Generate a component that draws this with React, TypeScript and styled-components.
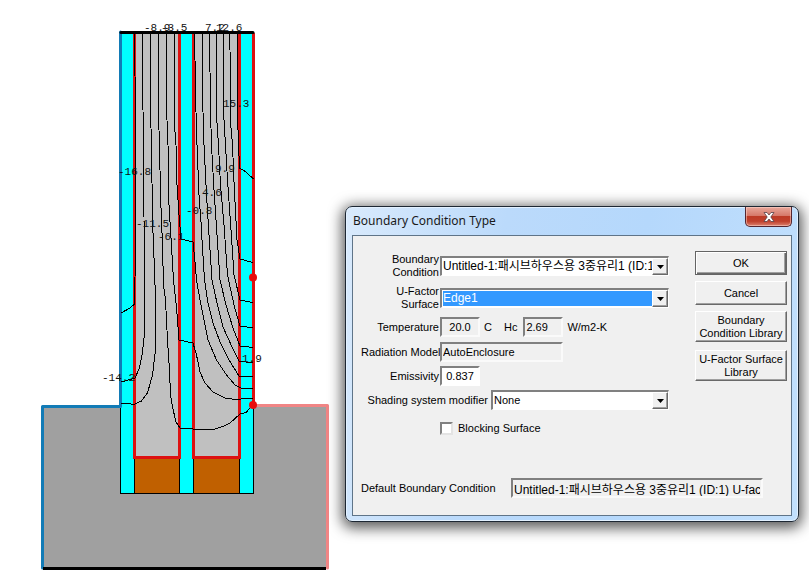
import React from "react";
import styled, { createGlobalStyle, css } from "styled-components";

const GlobalStyle = createGlobalStyle`
  *, *::before, *::after { box-sizing: border-box; }
  body {
    margin: 0;
    background: #fff;
    color: #000;
    font: 11px/13px "Liberation Sans", "Noto Sans CJK KR", sans-serif;
  }
  button, input, select { font: inherit; color: inherit; margin: 0; }
`;

const Workspace = styled.main`
  display: flex;
  align-items: flex-start;
  min-height: 100vh;
  overflow: hidden;
`;

const Drawing = styled.svg`
  display: block;
  flex: none;
  width: 330px;
  height: 583px;
`;

const Isotherms = styled.g`
  fill: none;
  stroke: #000;
  stroke-width: 1;
  shape-rendering: crispEdges;
`;

const Readings = styled.g`
  font: 11px "Liberation Mono", monospace;
  fill: #111;
`;

const Window = styled.section`
  flex: 1;
  min-width: 440px;
  margin: 206px 10px 0 15px;
  padding: 0 6px 5px;
  border: 1px solid #1d2733;
  border-radius: 7px;
  background: linear-gradient(100deg, #d9eafc 0, #bbdafb 32%, #b5d8fc 60%, #c2e0fd 100%);
  box-shadow: inset 0 0 0 1px #e3f1ff, 0 3px 14px 3px rgba(0, 0, 0, 0.65);
`;

const TitleBar = styled.header`
  display: flex;
  align-items: flex-start;
  justify-content: space-between;
  height: 28px;
`;

const Title = styled.h1`
  margin: 0;
  padding-left: 1px;
  font: 400 12px/27px "Noto Sans", sans-serif;
  color: #1a1a1a;
`;

const CloseButton = styled.button`
  display: grid;
  place-items: center;
  width: 47px;
  height: 20px;
  padding: 0;
  border: 1px solid #542630;
  border-top: 0;
  border-radius: 0 0 5px 5px;
  background: linear-gradient(#e9a89b 0, #d6796a 45%, #bd3a26 50%, #c0402c 75%, #dc8270 100%);
  box-shadow: inset 0 0 0 1px rgba(255, 220, 210, 0.5);
`;

const Client = styled.form`
  padding: 15px 4px 17px 8px;
  border: 1px solid #5f7488;
  background: #f0f0f0;
  white-space: nowrap;
`;

const Columns = styled.div`
  display: flex;
  gap: 26px;
`;

const Fields = styled.div`
  flex: 1;
  min-width: 0;
  padding-top: 2px;
`;

const Row = styled.div<{ $gap?: number }>`
  display: flex;
  align-items: center;
  margin-top: ${(p) => p.$gap ?? 0}px;
`;

const Label = styled.label<{ $wide?: boolean }>`
  flex: none;
  width: ${(p) => (p.$wide ? 130 : 79)}px;
  padding-right: ${(p) => (p.$wide ? 3 : 1)}px;
  text-align: right;
`;

const Unit = styled.span`
  padding: 0 4px;
`;

const HcLabel = styled.label`
  padding: 0 6px 0 8px;
`;

const sunken = css`
  border: 2px solid;
  border-color: #808080 #fff #fff #808080;
`;

const Field = styled.input<{ $width: number; $center?: boolean; $large?: boolean }>`
  ${sunken}
  width: ${(p) => p.$width}px;
  height: 20px;
  padding: 0 1px;
  border-radius: 0;
  outline: 0;
  background: #fff;
  font-size: ${(p) => (p.$large ? 12 : 11)}px;
  text-align: ${(p) => (p.$center ? "center" : "left")};
  &:read-only {
    background: #f0f0f0;
    border-right-color: #fafafa;
    border-bottom-color: #fafafa;
  }
`;

const SelectFrame = styled.div`
  ${sunken}
  position: relative;
  flex: 1;
  min-width: 0;
  height: 20px;
  border-right-width: 1px;
  border-bottom-width: 1px;
  background: #fff;
`;

const NativeSelect = styled.select<{ $active?: boolean; $large?: boolean }>`
  appearance: none;
  display: block;
  width: calc(100% - 17px);
  height: 15px;
  margin: 1px;
  padding: 0;
  border: 0;
  border-radius: 0;
  outline: 0;
  overflow: hidden;
  text-overflow: clip;
  line-height: 15px;
  font-size: ${(p) => (p.$large ? 12 : 11)}px;
  background: ${(p) => (p.$active ? "#3399ff" : "#fff")};
  color: ${(p) => (p.$active ? "#fff" : "#000")};
`;

const DropArrow = styled.span`
  position: absolute;
  inset: 0 0 0 auto;
  width: 16px;
  display: grid;
  place-items: center;
  border: 1px solid;
  border-color: #fff #696969 #696969 #fff;
  box-shadow: inset -1px -1px #a0a0a0;
  background: #f0f0f0;
  pointer-events: none;
`;

const CheckBox = styled.input`
  ${sunken}
  appearance: none;
  width: 13px;
  height: 13px;
  border-color: #808080 #e3e3e3 #e3e3e3 #808080;
  background: #fff;
  &:checked { background: #333; }
`;

const CheckLabel = styled.label`
  display: flex;
  align-items: center;
  gap: 5px;
  margin-left: 79px;
`;

const Buttons = styled.div`
  display: flex;
  flex-direction: column;
  gap: 6px;
  flex: none;
  width: 92px;
`;

const PushButton = styled.button<{ $tall?: boolean; $primary?: boolean }>`
  min-height: ${(p) => (p.$tall ? 31 : 24)}px;
  margin-bottom: ${(p) => (p.$tall ? 2 : 0)}px;
  padding: 0;
  border: 1px solid;
  border-color: ${(p) => (p.$primary ? "#646464" : "#fff #696969 #696969 #fff")};
  border-radius: 0;
  background: #f0f0f0;
  box-shadow: ${(p) =>
    p.$primary ? "inset 1px 1px #fff, inset -1px -1px #696969, inset -2px -2px #a0a0a0" : "inset -1px -1px #a0a0a0"};
`;

const DefaultLabel = styled.label`
  flex: none;
  width: 150px;
`;

const isotherms = [
  "134.5,33 135.5,118 135.5,250 134.5,304 130,308 121,313",
  "142.5,33 143,110 144,217 144.5,333 142.5,352 139.5,368 135,378 121.5,382",
  "150.5,33 150.5,110 151.5,145 152.5,220 154.5,270 155.5,300 155.5,350 152.5,375 147.5,393 141.5,401 133.5,404.5 126.5,403 121,403",
  "158.5,33 158.5,115 159.5,145 160.5,195 162.5,245 163.5,285 165.5,300 167.5,340 169.5,370 170.5,395 172.5,407 176,422 180,428 193,429 203.5,429.5 215.5,429 224,426 230,423 240,414 246,412.5 252,406",
  "166.5,33 166.5,108 168,145 169,205 171,238 173.5,280 176.5,307 179,340 193,343 196.5,355 200,372 205,383 213,392 225,398 235,399.5 253,398",
  "174.5,33 174.5,125 176,145 177,185 179,215 181,239 193,242 195,262 196.5,280 200,300 204,320 208,340 216.5,360 226.5,375 235,385 241,388 253,388",
  "194.5,33 196,112 197,145 199,195 201,222 202.5,248 204.5,280 208,303 213,323 220,342 229,360 239,376 253,377",
  "202.5,33 202.5,95 204,145 206.5,195 209,235 212,280 217,303 223,327 232,347 239,361 253,363",
  "209.5,33 210.5,110 211.5,145 214,190 217,235 220,280 226,305 233,328 240,346 253,347.5",
  "216.5,33 216.5,115 218.5,145 220.5,185 224,225 227.5,275 234,305 240,326 253,328",
  "223.5,33 224,120 225.5,145 227.5,180 231,230 234,275 240,300 253,302.5",
  "229.5,33 230,50 231,128 232.5,145 234,182 237,240 240,259 253,262.5",
  "237.5,33 238,130 239.5,168 246,172 253.5,179",
];

const readings: [number, number, string][] = [
  [144, 31, "-8.9"],
  [161, 31, "-3.5"],
  [205, 31, "7.2"],
  [216, 31, "12.6"],
  [223, 107, "15.3"],
  [118, 175, "-16.8"],
  [215, 172, "9.9"],
  [202, 196, "4.6"],
  [186, 214, "-0.8"],
  [136, 227, "-11.5"],
  [158, 240, "-6.1"],
  [102, 381, "-14.2"],
  [242, 362, "1.9"],
];

function GlazingSection() {
  return (
    <Drawing viewBox="0 0 330 583" role="img" aria-label="Glazing section with isotherms">
      <rect x="42" y="406" width="285" height="162" fill="#a0a0a0" />
      <rect x="120.5" y="32.5" width="133" height="461" fill="#00ffff" stroke="#000" />
      <rect x="134.5" y="33" width="45" height="425" fill="#c0c0c0" />
      <rect x="193.5" y="33" width="46" height="425" fill="#c0c0c0" />
      <rect x="134.5" y="457.5" width="45" height="36" fill="#c06000" stroke="#000" />
      <rect x="193.5" y="457.5" width="46" height="36" fill="#c06000" stroke="#000" />
      <g fill="none" strokeWidth="3">
        <path d="M134.5 33V457.500H179.500V33M193.500 33V457.500H239.500V33M253.500 33V405" stroke="#dd1111" />
        <path d="M120.500 32V406.500H42.500V568" stroke="#127bb6" strokeLinejoin="round" strokeLinecap="round" />
        <path d="M43 568.500H326" stroke="#000" />
        <path d="M254 405.500H327.500V568" stroke="#f08585" strokeLinejoin="round" strokeLinecap="round" />
      </g>
      <Isotherms>
        {isotherms.map((points) => (
          <polyline key={points} points={points} />
        ))}
      </Isotherms>
      <path d="M121 32.500H253" stroke="#000" strokeWidth="3" strokeLinecap="round" />
      <circle cx="253" cy="277.500" r="4" fill="#e80c0c" />
      <circle cx="253" cy="405" r="4" fill="#e80c0c" />
      <Readings>
        {readings.map(([x, y, value]) => (
          <text key={value} x={x} y={y}>{value}</text>
        ))}
      </Readings>
    </Drawing>
  );
}

function Select(props: { id: string; value: string; active?: boolean; large?: boolean }) {
  return (
    <SelectFrame>
      <NativeSelect id={props.id} $active={props.active} $large={props.large}>
        <option>{props.value}</option>
      </NativeSelect>
      <DropArrow>
        <svg width="7" height="4" viewBox="0 0 7 4" aria-hidden="true">
          <path d="M0 0H7L3.500 4Z" />
        </svg>
      </DropArrow>
    </SelectFrame>
  );
}

export default function App() {
  return (
    <>
      <GlobalStyle />
      <Workspace>
        <GlazingSection />
        <Window role="dialog" aria-labelledby="title">
          <TitleBar>
            <Title id="title">Boundary Condition Type</Title>
            <CloseButton type="button" aria-label="Close">
              <svg width="12" height="10" viewBox="0 0 12 10" aria-hidden="true">
                <path d="M1 .5H4L6 3L8 .5H11L7.800 5L11 9.500H8L6 7L4 9.500H1L4.200 5Z" fill="#fff" stroke="#574046" strokeWidth=".8" />
              </svg>
            </CloseButton>
          </TitleBar>
          <Client onSubmit={(e) => e.preventDefault()}>
            <Columns>
              <Fields>
                <Row>
                  <Label htmlFor="condition">Boundary<br />Condition</Label>
                  <Select id="condition" value="Untitled-1:패시브하우스용 3중유리1 (ID:1) U-factor" large />
                </Row>
                <Row $gap={6}>
                  <Label htmlFor="surface">U-Factor<br />Surface</Label>
                  <Select id="surface" value="Edge1" active large />
                </Row>
                <Row $gap={6}>
                  <Label htmlFor="temperature">Temperature</Label>
                  <Field id="temperature" $width={40} $center readOnly defaultValue="20.0" />
                  <Unit>C</Unit>
                  <HcLabel htmlFor="hc">Hc</HcLabel>
                  <Field id="hc" $width={40} readOnly defaultValue="2.69" />
                  <Unit>W/m2-K</Unit>
                </Row>
                <Row $gap={5}>
                  <Label htmlFor="radiation">Radiation Model</Label>
                  <Field id="radiation" $width={123} readOnly defaultValue="AutoEnclosure" />
                </Row>
                <Row $gap={4}>
                  <Label htmlFor="emissivity">Emissivity</Label>
                  <Field id="emissivity" $width={40} $center defaultValue="0.837" />
                </Row>
                <Row $gap={4}>
                  <Label htmlFor="shading" $wide>Shading system modifier</Label>
                  <Select id="shading" value="None" />
                </Row>
                <Row $gap={12}>
                  <CheckLabel>
                    <CheckBox type="checkbox" />
                    Blocking Surface
                  </CheckLabel>
                </Row>
              </Fields>
              <Buttons>
                <PushButton type="submit" $primary>OK</PushButton>
                <PushButton type="button">Cancel</PushButton>
                <PushButton type="button" $tall>Boundary<br />Condition Library</PushButton>
                <PushButton type="button" $tall>U-Factor Surface<br />Library</PushButton>
              </Buttons>
            </Columns>
            <Row $gap={43}>
              <DefaultLabel htmlFor="default">Default Boundary Condition</DefaultLabel>
              <Field id="default" $width={252} $large readOnly defaultValue="Untitled-1:패시브하우스용 3중유리1 (ID:1) U-factor" />
            </Row>
          </Client>
        </Window>
      </Workspace>
    </>
  );
}
